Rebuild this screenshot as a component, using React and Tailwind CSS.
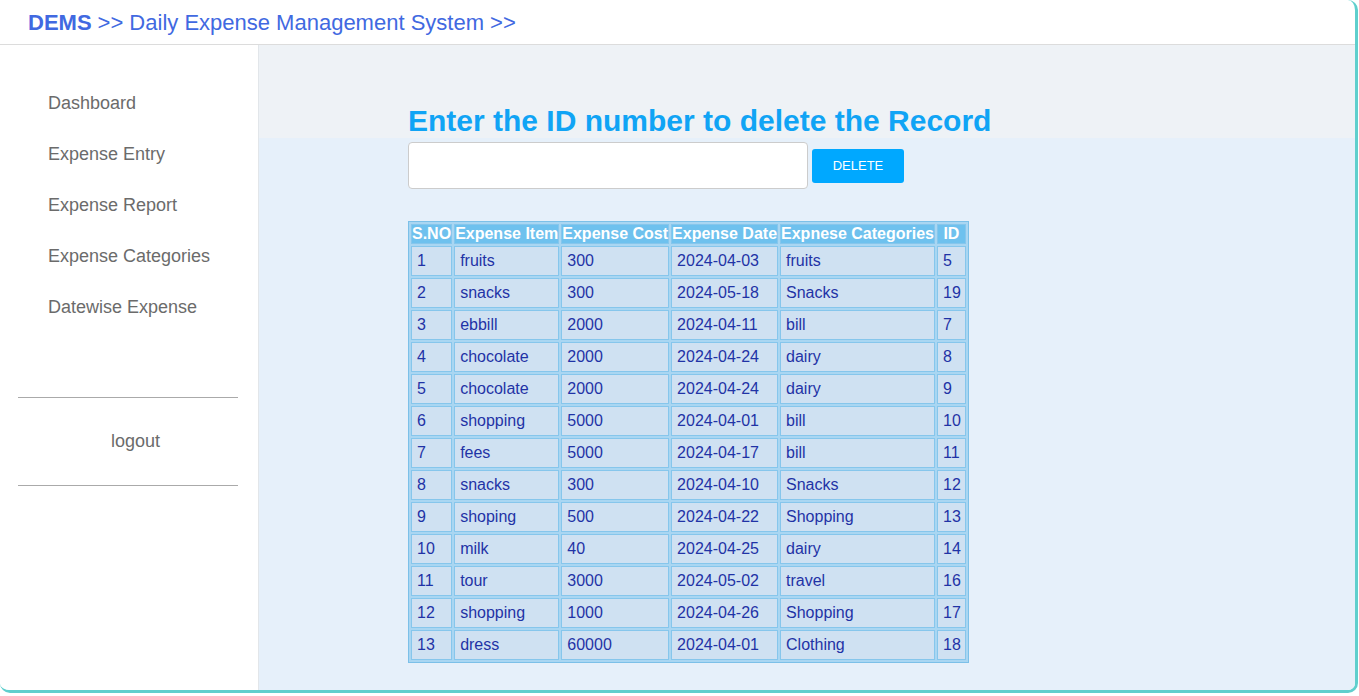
import React from "react";

const rows = [
  [1, "fruits", "300", "2024-04-03", "fruits", 5],
  [2, "snacks", "300", "2024-05-18", "Snacks", 19],
  [3, "ebbill", "2000", "2024-04-11", "bill", 7],
  [4, "chocolate", "2000", "2024-04-24", "dairy", 8],
  [5, "chocolate", "2000", "2024-04-24", "dairy", 9],
  [6, "shopping", "5000", "2024-04-01", "bill", 10],
  [7, "fees", "5000", "2024-04-17", "bill", 11],
  [8, "snacks", "300", "2024-04-10", "Snacks", 12],
  [9, "shoping", "500", "2024-04-22", "Shopping", 13],
  [10, "milk", "40", "2024-04-25", "dairy", 14],
  [11, "tour", "3000", "2024-05-02", "travel", 16],
  [12, "shopping", "1000", "2024-04-26", "Shopping", 17],
  [13, "dress", "60000", "2024-04-01", "Clothing", 18],
];

const headers = ["S.NO", "Expense Item", "Expense Cost", "Expense Date", "Expnese Categories", "ID"];
const menu = ["Dashboard", "Expense Entry", "Expense Report", "Expense Categories", "Datewise Expense"];

export default function App() {
  return (
    <div className="w-[1359px] h-[696px] bg-white overflow-hidden font-['Liberation_Sans',Arial,sans-serif]">
      <div className="w-[1358px] h-[693px] flex flex-col bg-white border-r-[3px] border-b-[3px] border-[#5fcfcd] rounded-tr-[10px] rounded-b-[10px] overflow-hidden">
        <header className="h-[45px] shrink-0 flex items-center pl-[28px] border-b border-[#dcdcdc] text-[22px] text-[#4169e1]">
          <span className="font-bold">DEMS</span>
          <span className="ml-[6px]">&gt;&gt; Daily Expense Management System &gt;&gt;</span>
        </header>
        <div className="flex flex-1 min-h-0">
          <aside className="w-[259px] shrink-0 bg-white border-r border-[#e2e6ea] pt-[46px]">
            <nav className="flex flex-col">
              {menu.map((m) => (
                <div key={m} className="h-[51px] pl-[48px] flex items-start text-[18px] leading-[24px] text-[#6b6b6b]">
                  {m}
                </div>
              ))}
            </nav>
            <div className="ml-[18px] w-[220px] mt-[51px] border-t border-[#aaaaaa]" />
            <div className="ml-[18px] w-[220px] h-[87px] flex items-center justify-center text-[18px] text-[#6b6b6b] pl-[15px]">logout</div>
            <div className="ml-[18px] w-[220px] border-t border-[#aaaaaa]" />
          </aside>
          <main className="flex-1 flex flex-col bg-[#e6f0fa]">
            <div className="h-[93px] shrink-0 bg-[#eef2f6] pl-[149px] pt-[59px]">
              <h1 className="text-[30px] leading-[34px] font-bold text-[#10a4f5]">Enter the ID number to delete the Record</h1>
            </div>
            <div className="pl-[149px] pt-[4px]">
              <div className="flex items-center gap-[4px]">
                <input className="w-[400px] h-[47px] bg-white border border-[#cccccc] rounded-[4px]" />
                <button className="w-[92px] h-[34px] bg-[#00a8ff] rounded-[3px] text-white text-[13px]">DELETE</button>
              </div>
              <table className="mt-[32px] border border-[#7cc0e8] border-separate border-spacing-[2px] bg-[#a9d6f2] text-[16px] leading-[18px]">
                <thead>
                  <tr>
                    {headers.map((h) => (
                      <th key={h} className="border border-[#86c6ec] bg-[#6ec1ee] text-white font-bold px-0 py-0 leading-[18px] whitespace-nowrap">
                        {h}
                      </th>
                    ))}
                  </tr>
                </thead>
                <tbody>
                  {rows.map((r) => (
                    <tr key={r[0]}>
                      {r.map((c, i) => (
                        <td key={i} className="border border-[#86c6ec] bg-[#cfe1f2] text-[#1f33a6] pl-[5px] pr-[4px] py-[5px] text-left whitespace-nowrap">
                          {c}
                        </td>
                      ))}
                    </tr>
                  ))}
                </tbody>
              </table>
            </div>
          </main>
        </div>
      </div>
    </div>
  );
}
